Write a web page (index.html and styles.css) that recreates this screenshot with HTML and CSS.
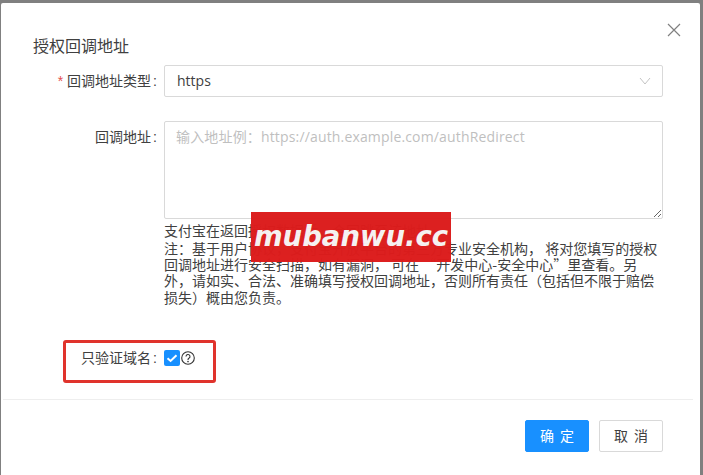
FILE: index.html
```html
<!DOCTYPE html>
<html lang="zh-CN">
<head>
<meta charset="utf-8">
<title>授权回调地址</title>
<link rel="stylesheet" href="styles.css">
</head>
<body>
<div class="modal">
  <button class="close" aria-label="关闭">
    <svg width="14" height="14" viewBox="0 0 14 14"><path d="M1 1L13 13M13 1L1 13" fill="none" stroke="#808080" stroke-width="1.2"/></svg>
  </button>
  <div class="body">
    <h2 class="title">授权回调地址</h2>
    <div class="row row-type">
      <label class="label"><span class="req">*</span>回调地址类型<span class="colon">:</span></label>
      <div class="select">
        <span class="value">https</span>
        <svg width="12" height="8" viewBox="0 0 12 8"><path d="M1 1L6 7L11 1" fill="none" stroke="#c4c4c4" stroke-width="1"/></svg>
      </div>
    </div>
    <div class="row row-url">
      <label class="label">回调地址<span class="colon">:</span></label>
      <div class="field">
        <textarea class="area" placeholder="输入地址例：https://auth.example.com/authRedirect"></textarea>
        <p class="help first">支付宝在返回授权数据后，会回跳至该地址</p>
        <p class="help">注：基于用户协议，支付宝开放平台的第三方专业安全机构， 将对您填写的授权回调地址进行安全扫描，如有漏洞， 可在 “开发中心-安全中心”里查看。另外，请如实、合法、准确填写授权回调地址，否则所有责任（包括但不限于赔偿损失）概由您负责。</p>
      </div>
    </div>
    <div class="row row-check">
      <label class="label">只验证域名<span class="colon">:</span></label>
      <span class="check">
        <svg width="16" height="16" viewBox="0 0 16 16"><rect width="16" height="16" rx="2" fill="#1890ff"/><path d="M3.5 8.2L6.6 11L12.5 5.2" fill="none" stroke="#fff" stroke-width="2"/></svg>
      </span>
      <svg class="q" width="14" height="14" viewBox="0 0 14 14"><circle cx="7" cy="7" r="6.3" fill="none" stroke="#333" stroke-width="1.1"/><path d="M5 5.5A2 2 0 1 1 7.9 7.3C7.2 7.7 7 8 7 8.9" fill="none" stroke="#333" stroke-width="1.1"/><circle cx="7" cy="10.6" r=".8" fill="#333"/></svg>
    </div>
  </div>
  <div class="footer">
    <button class="btn primary">确 定</button>
    <button class="btn">取 消</button>
  </div>
</div>
<div class="mark-box"></div>
<div class="watermark">mubanwu.cc</div>
</body>
</html>
```
FILE: styles.css
```css
* { box-sizing: border-box; }
html, body { margin: 0; height: 475px; overflow: hidden; }
body {
  position: relative;
  background: #808080;
  padding: 3px 3px 0 1px;
  font-family: "Noto Sans CJK SC", "Liberation Sans", sans-serif;
  font-size: 14px;
  color: #404040;
}
.modal {
  position: relative;
  height: 472px;
  background: #fff;
  border-radius: 2px 2px 0 0;
  display: flex;
  flex-direction: column;
}
.close {
  position: absolute;
  top: 20px;
  right: 19px;
  padding: 0;
  border: 0;
  background: none;
  display: flex;
}
.body {
  flex: none;
  height: 397px;
  margin: 0 7px 0 2px;
  padding: 32px 30px 0;
  border-bottom: 1px solid #eeeeee;
}
.title {
  height: 20px;
  margin: 0 0 10px;
  font-size: 16px;
  font-weight: 400;
  line-height: 20px;
  color: #404040;
}
.row { display: flex; align-items: flex-start; }
.row-url { margin-top: 24px; }
.row-check { margin-top: 45px; align-items: center; height: 16px; }
.label {
  flex: none;
  width: 131px;
  height: 32px;
  text-align: right;
  line-height: 30px;
  white-space: nowrap;
  color: #404040;
}
.row-check .label { height: 16px; line-height: 14px; }
.colon { font-family: "Liberation Sans", sans-serif; margin: 0 7px 0 2px; }
.req { color: #e4504f; margin-right: 4px; font-family: "Liberation Sans", sans-serif; }
.select {
  width: 499px;
  height: 32px;
  border: 1px solid #d9d9d9;
  border-radius: 2px;
  padding: 0 11px 0 12px;
  display: flex;
  align-items: center;
  justify-content: space-between;
  font-family: "Open Sans", sans-serif;
}
.value { padding-bottom: 2px; }
.field { width: 499px; }
.area {
  display: block;
  width: 499px;
  height: 98px;
  border: 1px solid #d9d9d9;
  border-radius: 2px;
  padding: 6px 11px;
  font: 14px/18px "Open Sans", "Noto Sans CJK SC", sans-serif;
  letter-spacing: .16px;
  outline: none;
}
.area::placeholder { color: #bfbfbf; opacity: 1; }
.help { margin: 0; width: 496px; font-size: 14px; line-height: 16.2px; color: #404040; }
.help.first { margin-top: 3px; line-height: 16px; }
.help:not(.first) { margin-top: 2px; }
.check { display: flex; flex: none; }
.q { margin-left: 1px; flex: none; }
.footer {
  flex: 1;
  display: flex;
  justify-content: flex-end;
  align-items: flex-start;
  gap: 10px;
  padding: 20px 37px 0 0;
}
.btn {
  width: 64px;
  height: 32px;
  border: 1px solid #d9d9d9;
  border-radius: 2px;
  background: #fff;
  color: #404040;
  padding: 0 0 2px;
  font: 14px "Noto Sans CJK SC", sans-serif;
  word-spacing: 3px;
}
.btn.primary { background: #1890ff; border-color: #1890ff; color: #fff; }
.mark-box {
  position: absolute;
  left: 63px;
  top: 340px;
  width: 153px;
  height: 43px;
  border: 3px solid #e0332c;
  border-radius: 3px;
}
.watermark {
  position: absolute;
  left: 251px;
  top: 212px;
  width: 200px;
  height: 50px;
  background: #dc1c1c;
  color: #f6f2f2;
  font: italic 700 27.5px/48px "DejaVu Sans", sans-serif;
  text-align: center;
  white-space: nowrap;
  overflow: hidden;
  opacity: .98;
}
```
